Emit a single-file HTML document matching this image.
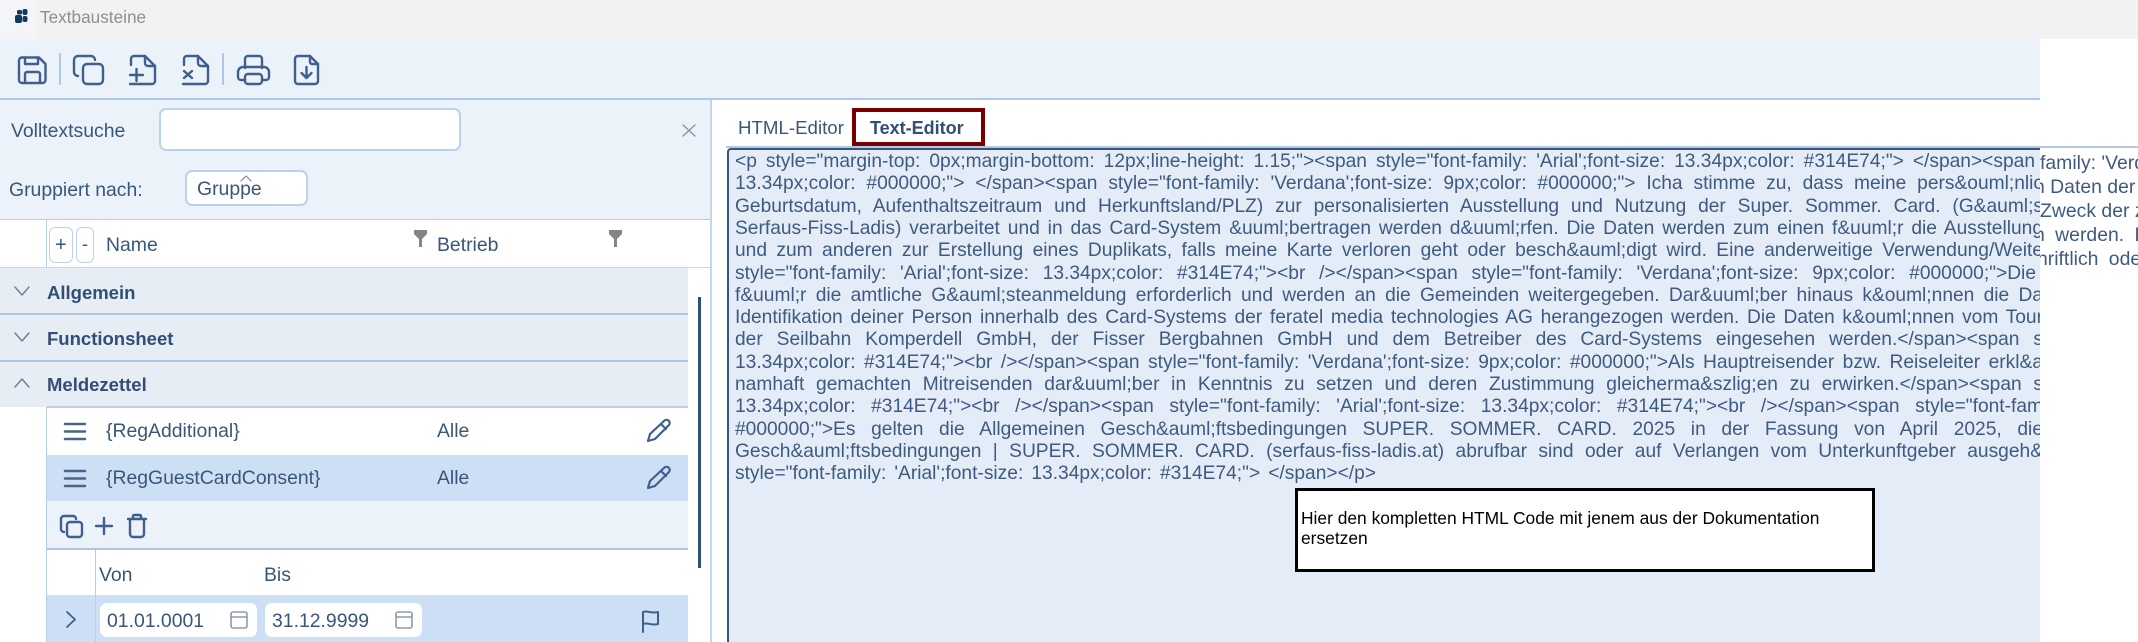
<!DOCTYPE html>
<html lang="de"><head><meta charset="utf-8"><title>Textbausteine</title>
<style>
html,body{margin:0;padding:0;width:2138px;height:642px;overflow:hidden;background:#fff}
body{position:relative;font-family:"Liberation Sans",sans-serif;color:#3a5679;font-size:19.4px}
.a,.t{position:absolute}
.t{white-space:nowrap;line-height:22px;height:22px}
.b{font-weight:bold;color:#314e74;font-size:18.5px}
.inp{background:#fff;border:2px solid #bcd1ee;border-radius:7px;box-sizing:border-box}
#ed{position:absolute;left:0;top:0;width:2040px;height:642px;overflow:hidden}
.l{position:absolute;left:735px;height:26px;line-height:22px;overflow:hidden;font-size:19.2px;color:#3f5a80;white-space:pre}
.r{position:absolute;left:2040px;width:98px;height:26px;overflow:hidden;white-space:nowrap;font-size:19.4px;line-height:22px;color:#3f5a80}
svg{position:absolute;left:0;top:0}
</style></head><body>
<div class="a" style="left:0;top:0;width:2138px;height:39px;background:#f2f2f2"></div>
<div class="a" style="left:0;top:0;width:37px;height:39px;background:#f3f5f8"></div>
<div class="t" style="left:40px;top:6px;font-size:17.2px;color:#8f8f8f">Textbausteine</div>
<div class="a" style="left:0;top:39px;width:2040px;height:59px;background:#ecf2fa"></div>
<div class="a" style="left:0;top:98px;width:2040px;height:2px;background:#b1c9ea"></div>

<!-- left filter panel -->
<div class="a" style="left:0;top:100px;width:710px;height:119px;background:#ecf2fa"></div>
<div class="a" style="left:710px;top:100px;width:2px;height:542px;background:#c4d6ee"></div>
<div class="t" style="left:11px;top:120px">Volltextsuche</div>
<div class="a inp" style="left:159px;top:108px;width:302px;height:43px"></div>
<div class="t" style="left:9px;top:179px">Gruppiert nach:</div>
<div class="a inp" style="left:185px;top:170px;width:123px;height:36px"></div>
<div class="t" style="left:197px;top:178px">Gruppe</div>

<!-- table header -->
<div class="a" style="left:0;top:219px;width:710px;height:1px;background:#b7cdea"></div>
<div class="a" style="left:0;top:267px;width:710px;height:1px;background:#c6d8ef"></div>
<div class="a" style="left:46px;top:220px;width:1px;height:422px;background:#b7cdea"></div>
<div class="a inp" style="left:49px;top:227px;width:24px;height:36px;border-width:1px;border-radius:6px"></div>
<div class="a inp" style="left:76px;top:227px;width:18px;height:36px;border-width:1px;border-radius:6px"></div>
<div class="t" style="left:55px;top:234px;font-size:20px">+</div>
<div class="t" style="left:82px;top:233px;font-size:18px">-</div>
<div class="t" style="left:106px;top:234px">Name</div>
<div class="t" style="left:437px;top:234px">Betrieb</div>

<!-- groups -->
<div class="a" style="left:0;top:268px;width:688px;height:139px;background:#e7edf5"></div>
<div class="a" style="left:0;top:313px;width:688px;height:2px;background:#aec6e6"></div>
<div class="a" style="left:0;top:360px;width:688px;height:2px;background:#aec6e6"></div>
<div class="a" style="left:47px;top:406px;width:641px;height:2px;background:#bdd0ea"></div>
<div class="t b" style="left:47px;top:282px">Allgemein</div>
<div class="t b" style="left:47px;top:328px">Functionsheet</div>
<div class="t b" style="left:47px;top:374px">Meldezettel</div>
<div class="a" style="left:698px;top:297px;width:3px;height:271px;background:#2f4f7a"></div>

<!-- items -->
<div class="a" style="left:47px;top:455px;width:641px;height:46px;background:#cddff4"></div>
<div class="t" style="left:106px;top:420px">{RegAdditional}</div>
<div class="t" style="left:437px;top:420px">Alle</div>
<div class="t" style="left:106px;top:467px">{RegGuestCardConsent}</div>
<div class="t" style="left:437px;top:467px">Alle</div>
<div class="a" style="left:47px;top:501px;width:641px;height:47px;background:#ecf2fa"></div>
<div class="a" style="left:47px;top:548px;width:641px;height:2px;background:#aec6e6"></div>
<div class="a" style="left:95px;top:550px;width:1px;height:92px;background:#b7cdea"></div>
<div class="t" style="left:99px;top:564px">Von</div>
<div class="t" style="left:264px;top:564px">Bis</div>
<div class="a" style="left:47px;top:595px;width:641px;height:47px;background:#cddff4"></div>
<div class="a" style="left:95px;top:595px;width:1px;height:47px;background:#b7cdea"></div>
<div class="a" style="left:100px;top:603px;width:157px;height:34px;background:#fff;border-radius:7px"></div>
<div class="a" style="left:265px;top:603px;width:157px;height:34px;background:#fff;border-radius:7px"></div>
<div class="t" style="left:107px;top:610px">01.01.0001</div>
<div class="t" style="left:272px;top:610px">31.12.9999</div>

<!-- right -->
<div class="t" style="left:738px;top:117px;font-size:18.7px">HTML-Editor</div>
<div class="t b" style="left:870px;top:117px;font-size:18px">Text-Editor</div>
<div class="a" style="left:852px;top:108px;width:133px;height:38px;box-sizing:border-box;border:4px solid #7a0000"></div>
<div class="a" style="left:726px;top:146px;width:1412px;height:2px;background:#b3c8e5"></div>
<div class="a" style="left:727px;top:148px;width:1313px;height:494px;background:#e4edf7;border-left:2px solid #35557f;border-top:2px solid #35557f;box-sizing:border-box;border-top-left-radius:4px"></div>
<div id="ed">
<div class="l" style="top:151px;width:1300px">&lt;p style="margin-top: 0px;margin-bottom: 12px;line-height: 1.15;"&gt;&lt;span style="font-family: 'Arial';font-size: 13.34px;color: #314E74;"&gt; &lt;/span&gt;&lt;span</div>
<div class="l" style="top:173.3px;width:1308px">13.34px;color: #000000;"&gt; &lt;/span&gt;&lt;span style="font-family: 'Verdana';font-size: 9px;color: #000000;"&gt; Icha stimme zu, dass meine pers&amp;ouml;nlic</div>
<div class="l" style="top:195.6px;width:1308px">Geburtsdatum, Aufenthaltszeitraum und Herkunftsland/PLZ) zur personalisierten Ausstellung und Nutzung der Super. Sommer. Card. (G&amp;auml;s</div>
<div class="l" style="top:217.9px;width:1308px">Serfaus-Fiss-Ladis) verarbeitet und in das Card-System &amp;uuml;bertragen werden d&amp;uuml;rfen. Die Daten werden zum einen f&amp;uuml;r die Ausstellung</div>
<div class="l" style="top:240.2px;width:1308px">und zum anderen zur Erstellung eines Duplikats, falls meine Karte verloren geht oder besch&amp;auml;digt wird. Eine anderweitige Verwendung/Weite</div>
<div class="l" style="top:262.5px;width:1301px">style="font-family: 'Arial';font-size: 13.34px;color: #314E74;"&gt;&lt;br /&gt;&lt;/span&gt;&lt;span style="font-family: 'Verdana';font-size: 9px;color: #000000;"&gt;Die</div>
<div class="l" style="top:284.8px;width:1308px">f&amp;uuml;r die amtliche G&amp;auml;steanmeldung erforderlich und werden an die Gemeinden weitergegeben. Dar&amp;uuml;ber hinaus k&amp;ouml;nnen die Da</div>
<div class="l" style="top:307.1px;width:1308px">Identifikation deiner Person innerhalb des Card-Systems der feratel media technologies AG herangezogen werden. Die Daten k&amp;ouml;nnen vom Tour</div>
<div class="l" style="top:329.4px;width:1308px">der Seilbahn Komperdell GmbH, der Fisser Bergbahnen GmbH und dem Betreiber des Card-Systems eingesehen werden.&lt;/span&gt;&lt;span s</div>
<div class="l" style="top:351.7px;width:1308px">13.34px;color: #314E74;"&gt;&lt;br /&gt;&lt;/span&gt;&lt;span style="font-family: 'Verdana';font-size: 9px;color: #000000;"&gt;Als Hauptreisender bzw. Reiseleiter erkl&amp;a</div>
<div class="l" style="top:374px;width:1308px">namhaft gemachten Mitreisenden dar&amp;uuml;ber in Kenntnis zu setzen und deren Zustimmung gleicherma&amp;szlig;en zu erwirken.&lt;/span&gt;&lt;span s</div>
<div class="l" style="top:396.3px;width:1308px">13.34px;color: #314E74;"&gt;&lt;br /&gt;&lt;/span&gt;&lt;span style="font-family: 'Arial';font-size: 13.34px;color: #314E74;"&gt;&lt;br /&gt;&lt;/span&gt;&lt;span style="font-fam</div>
<div class="l" style="top:418.6px;width:1308px">#000000;"&gt;Es gelten die Allgemeinen Gesch&amp;auml;ftsbedingungen SUPER. SOMMER. CARD. 2025 in der Fassung von April 2025, die</div>
<div class="l" style="top:440.9px;width:1308px">Gesch&amp;auml;ftsbedingungen | SUPER. SOMMER. CARD. (serfaus-fiss-ladis.at) abrufbar sind oder auf Verlangen vom Unterkunftgeber ausgeh&amp;</div>
<div class="l" style="top:463.2px;width:641px">style="font-family: 'Arial';font-size: 13.34px;color: #314E74;"&gt; &lt;/span&gt;&lt;/p&gt;</div>
</div>
<div class="r" style="top:152px">family: 'Verdana'</div>
<div class="r" style="top:176px"><span style="margin-left:-6px">n Daten der e</span></div>
<div class="r" style="top:200px">Zweck der zei</div>
<div class="r" style="top:224px;word-spacing:5px"><span style="margin-left:-6px">n werden. Die</span></div>
<div class="r" style="top:248px;word-spacing:5px"><span style="margin-left:-3px">hriftlich oder</span></div>

<div class="a" style="left:1295px;top:488px;width:580px;height:84px;box-sizing:border-box;background:#fff;border:3px solid #000"></div>
<div class="t" style="left:1301px;top:507px;font-size:17.4px;color:#000">Hier den kompletten HTML Code mit jenem aus der Dokumentation</div>
<div class="t" style="left:1301px;top:527px;font-size:17.4px;color:#000">ersetzen</div>

<svg width="2138" height="642" viewBox="0 0 2138 642" fill="none" stroke="#3f5f8c" stroke-width="2.4" stroke-linecap="round" stroke-linejoin="round">
<!-- logo -->
<g fill="#0e3a5f" stroke="none"><rect x="15" y="15" width="7" height="8" rx="2"/><rect x="17" y="10" width="5" height="4.500" rx="1.500"/><rect x="22.500" y="9" width="5" height="6" rx="2"/><rect x="22.500" y="16" width="5" height="6" rx="2"/></g>
<!-- toolbar -->
<path d="M22 57.5h17l6.5 6.5v16a3 3 0 0 1-3 3H22a3 3 0 0 1-3-3V60.5a3 3 0 0 1 3-3z"/><path d="M25 58v6h13v-6M25 83V74a2 2 0 0 1 2-2h11a2 2 0 0 1 2 2v9"/>
<path d="M60 54v30M223 54v30" stroke="#aec6e6" stroke-width="2"/>
<rect x="83" y="64" width="20" height="20" rx="4"/><path d="M78 76a4 4 0 0 1-4-4V60a4 4 0 0 1 4-4h13a4 4 0 0 1 4 4"/>
<path d="M131 65v-6a3 3 0 0 1 3-3h11l10 10v15a3 3 0 0 1-3 3h-22"/><path d="M145 56v7a3 3 0 0 0 3 3h7M130 75h13M136.5 69v12"/>
<path d="M184 65v-6a3 3 0 0 1 3-3h11l10 10v15a3 3 0 0 1-3 3h-22"/><path d="M198 56v7a3 3 0 0 0 3 3h7M184 71l8 7M192 71l-8 7"/>
<path d="M245 68V59a3 3 0 0 1 3-3h11a3 3 0 0 1 3 3v9"/><path d="M245 80h-4a3 3 0 0 1-3-3v-5a5 5 0 0 1 5-5h21a5 5 0 0 1 5 5v5a3 3 0 0 1-3 3h-4"/><rect x="245" y="74" width="17" height="10" rx="3"/>
<path d="M298 56h12l8 8v17a3 3 0 0 1-3 3h-17a3 3 0 0 1-3-3V59a3 3 0 0 1 3-3z"/><path d="M310 56v6a2 2 0 0 0 2 2h6M306.5 67v11m-5-5 5 5 5-5"/>
<!-- clear x, caret -->
<path d="M683 125l12 11M695 125l-12 11" stroke="#8a96a6" stroke-width="1.4"/>
<path d="M241 181l5-5 5 5" stroke="#7a8899" stroke-width="1.2"/>
<!-- filters -->
<g fill="#858585" stroke="none"><path d="M414 230h13v4l-5 5v8h-3v-8l-5-5z"/><path d="M609 230h13v4l-5 5v8h-3v-8l-5-5z"/></g>
<!-- chevrons -->
<path d="M15 287l7 8 7-8M15 333l7 8 7-8M15 387l7-8 7 8" stroke="#6d7f96" stroke-width="1.4"/>
<!-- hamburger -->
<path d="M65 424h20M65 431.5h20M65 439h20M65 471h20M65 478.5h20M65 486h20" stroke="#4a6389" stroke-width="2.500"/>
<!-- pencils -->
<path d="M648 441l2-7 14-13a3 3 0 0 1 5 4l-14 14zM661 424l5 5" stroke-width="2.200"/>
<path d="M648 488l2-7 14-13a3 3 0 0 1 5 4l-14 14zM661 471l5 5" stroke-width="2.200"/>
<!-- sub toolbar -->
<rect x="67" y="522" width="15" height="15" rx="3"/><path d="M64 532a3 3 0 0 1-3-3v-10a3 3 0 0 1 3-3h9a3 3 0 0 1 3 3"/>
<path d="M96 526h16M104 518v16"/>
<path d="M128 519h18M133 518v-2a1 1 0 0 1 1-1h6a1 1 0 0 1 1 1v2M130 519v15a3 3 0 0 0 3 3h8a3 3 0 0 0 3-3v-15"/>
<!-- row -->
<path d="M67 612l8 7.500-8 7.500" stroke-width="1.800"/>
<g stroke="#8d9aab" stroke-width="1.600"><rect x="231" y="612" width="16" height="16" rx="2"/><path d="M231 617h16"/><rect x="396" y="612" width="16" height="16" rx="2"/><path d="M396 617h16"/></g>
<path d="M643 632v-20c5-2 7 2 15 0v12c-7 2-10-2-15 0" stroke-width="2"/>
</svg>
<script>
document.querySelectorAll('.l').forEach(function(e){
  var target=parseFloat(e.style.width);
  var r=document.createRange();r.selectNodeContents(e);
  var w=r.getBoundingClientRect().width;
  var txt=e.textContent,n=txt.split(' ').length-1,extra=target-w;
  if(extra/n<2){
    e.style.wordSpacing='2px';
    e.style.letterSpacing=((extra-2*n)/txt.length)+'px';
  }else{
    e.style.wordSpacing=(extra/n)+'px';
  }
});
</script>
</body></html>
